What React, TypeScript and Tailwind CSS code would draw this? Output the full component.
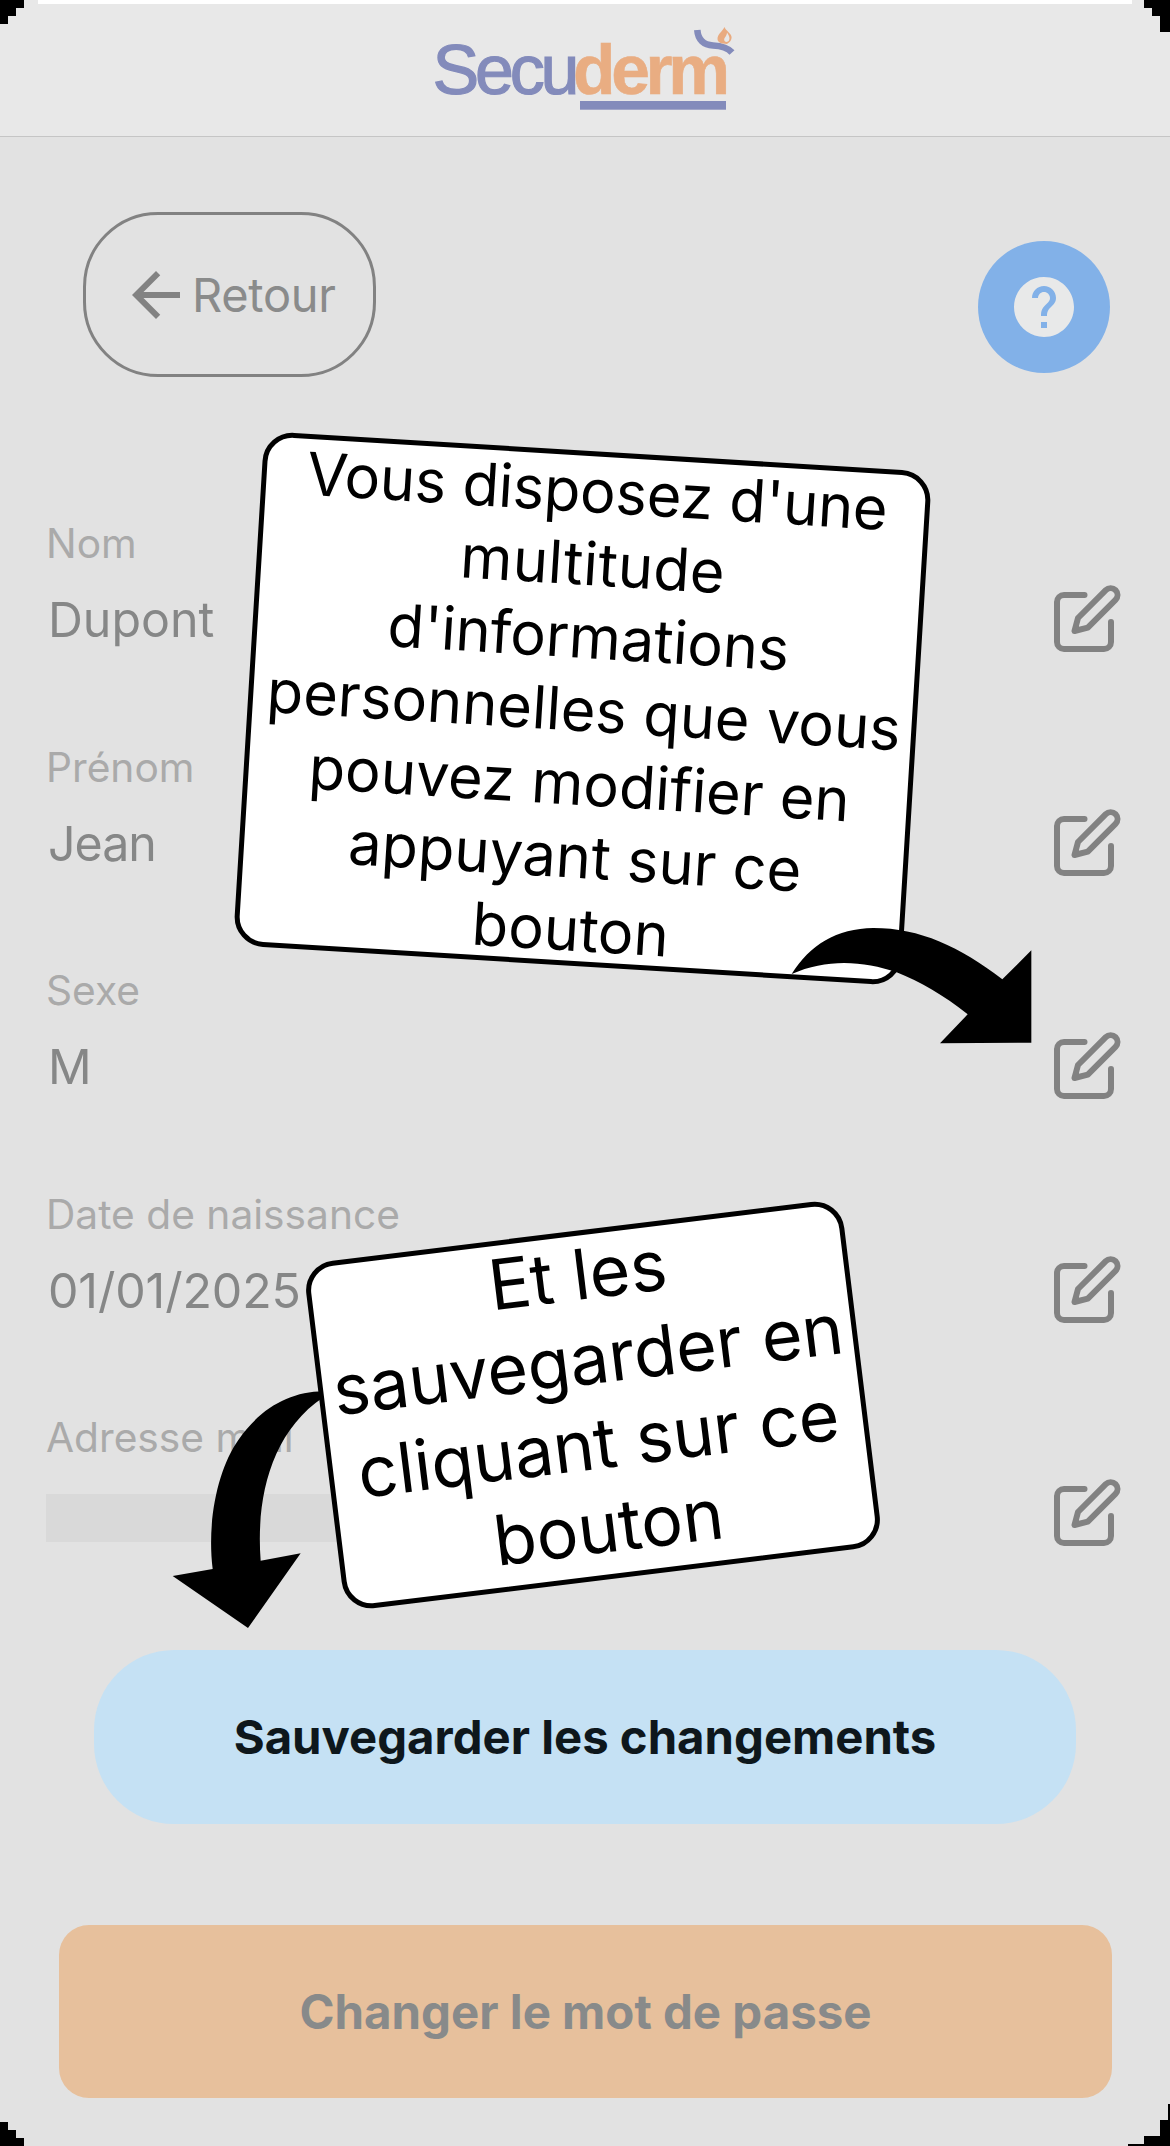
import { MdArrowBack, MdHelp } from "react-icons/md";

const fields = [
  { label: "Nom", value: "Dupont", spacing: "tracking-normal" },
  { label: "Prénom", value: "Jean", spacing: "tracking-[-1px]" },
  { label: "Sexe", value: "M", spacing: "tracking-normal" },
  { label: "Date de naissance", value: "01/01/2025", spacing: "tracking-[-0.1px]" },
  { label: "Adresse mail", value: "", spacing: "" },
];

function Logo() {
  return (
    <svg width="310" height="90" viewBox="430 24 310 90" className="mt-6 shrink-0">
      <g fontFamily="Liberation Sans, Arial, sans-serif">
        <text x="432.5" y="93.5" fontSize="70" fill="#838bbb" stroke="#838bbb" strokeWidth="1.2" textLength="147" lengthAdjust="spacing">Secu</text>
        <text x="573" y="93.5" fontSize="69.5" fontWeight="700" fill="#e9ad82" stroke="#e9ad82" strokeWidth="0.6" textLength="157" lengthAdjust="spacing">derm</text>
      </g>
      <rect x="580" y="101" width="146" height="8.7" fill="#838bbb" />
      <path d="M697.3 30C698 40 704 45 713 45.5C722 46 728 48 732 52.5" fill="none" stroke="#838bbb" strokeWidth="6.6" />
      <path fillRule="evenodd" d="M724.5 27C722 32 717.500 34 717.500 39C717.500 41 719 42.5 721 43.2L727 44C730 42 731.8 40 731.6 37C731 33 726 31 724.5 27ZM727 32.500C729.500 36 730 38 729 40.500C728 42.500 724.500 42.500 724.200 40C724 37.500 727 36 727 32.500Z" fill="#e9ab80" />
    </svg>
  );
}

function EditIcon() {
  return (
    <svg width="72" height="76" viewBox="0 0 72 76" fill="none" stroke="#828282" strokeWidth="6" strokeLinecap="round" strokeLinejoin="round">
      <path d="M34.500 15H14a7 7 0 0 0-7 7V62a7 7 0 0 0 7 7H54a7 7 0 0 0 7-7V42" />
      <path d="M24.500 51L28 38L55.800 10.200a6.800 6.800 0 0 1 9.700 9.700L37.800 47.600Z" />
    </svg>
  );
}

export default function App() {
  return (
    <div className="relative flex h-[2146px] w-[1170px] flex-col overflow-hidden bg-[#e2e2e2] font-[Inter,sans-serif]">
      <header className="flex h-[137px] shrink-0 justify-center border-b border-[#c5c5c5] bg-[#e8e8e8]">
        <Logo />
      </header>

      <div className="mt-[75px] flex h-[165px] shrink-0 justify-between pr-[60px] pl-[83px]">
        <button className="flex h-[165px] w-[293px] items-center rounded-[75px] border-3 border-[#828282] pl-[34px] text-[#828282]">
          <MdArrowBack size={72} className="shrink-0" />
          <span className="pt-px text-[47px] tracking-[-0.3px] text-[#8a8b8b]">Retour</span>
        </button>
        <button className="mt-[29px] flex size-[132px] items-center justify-center rounded-full bg-[#82b1e8]">
          <MdHelp size={72} color="#e8e9e9" />
        </button>
      </div>

      <div className="mt-[136px] flex shrink-0 flex-col">
        {fields.map((f) => (
          <div key={f.label} className="flex h-[223.600px] justify-between pr-[48px] pl-[46px]">
            <div>
              <div className="mt-px h-[60px] text-[40.700px] leading-[60px] text-[#aaaaaa]">{f.label}</div>
              {f.value ? (
                <div className={`mt-[13px] ml-[2px] text-[48.300px] leading-[66px] text-[#868787] ${f.spacing}`}>{f.value}</div>
              ) : (
                <div className="mt-[26px] h-[48px] w-[320px] bg-[#d9d9d9]" />
              )}
            </div>
            <div className="mt-[67px]">
              <EditIcon />
            </div>
          </div>
        ))}
      </div>

      <button className="mt-[19px] ml-[94px] h-[174px] w-[982px] shrink-0 rounded-[80px] bg-[#c5e1f4] text-[47.300px] font-bold text-[#0e171c]">
        Sauvegarder les changements
      </button>
      <button className="mt-[101px] ml-[59px] h-[173px] w-[1053px] shrink-0 rounded-[30px] bg-[#e7c09c] text-[47.400px] font-bold text-[#888a8a]">
        Changer le mot de passe
      </button>

      {/* Tutorial bubbles */}
      <div className="absolute top-[451px] left-[247.500px] flex h-[515px] w-[669px] rotate-[3.5deg] flex-col items-center justify-center rounded-[30px] border-5 border-black bg-white pt-[3px] pl-[3px] text-center text-[59.500px] leading-[73.200px] whitespace-nowrap text-black">
        <p className="tracking-[-0.2px]">Vous disposez d'une</p>
        <p className="tracking-[0.300px]">multitude</p>
        <p className="tracking-[-0.2px]">d'informations</p>
        <p>personnelles que vous</p>
        <p>pouvez modifier en</p>
        <p>appuyant sur ce</p>
        <p>bouton</p>
      </div>
      <svg className="absolute inset-0" width="1170" height="2146" viewBox="0 0 1170 2146">
        <g transform="translate(760 900) scale(0.33333)">
          <path d="M95 222C150 135 230 85 340 84C480 84 600 140 727 238L814 151V428L540 430L623 343C550 285 480 245 410 217C310 182 200 175 95 222Z" />
        </g>
        <g transform="translate(150 1360) scale(0.33333)">
          <path d="M520 94C420 95 330 145 265 240C205 325 170 480 188 627L68 648L294 804L452 580L332 602C318 420 360 220 520 112Z" />
        </g>
      </svg>
      <div className="absolute top-[1229.500px] left-[322px] flex h-[350px] w-[542px] rotate-[-7deg] flex-col items-center justify-center rounded-[30px] border-5 border-black bg-white pb-[7px] pl-px text-center text-[69.700px] leading-[84.700px] whitespace-nowrap text-black">
        <p>Et les</p>
        <p>sauvegarder en</p>
        <p>cliquant sur ce</p>
        <p>bouton</p>
      </div>

      {/* Stepped frame corners and top highlight */}
      <svg className="absolute inset-0" width="1170" height="2146" viewBox="0 0 1170 2146" shapeRendering="crispEdges">
        <path d="M38 0H1132V4H38Z" fill="#fff" />
        <path d="M0 0H24V8H16V16H8V24H0Z" />
        <path d="M1170 0H1144V8H1152V16H1160V32H1170Z" />
        <path d="M0 2146V2122H8V2130H16V2138H24V2146Z" />
        <path d="M1170 2146H1128V2144H1144V2136H1160V2120H1168V2104H1170Z" />
      </svg>
    </div>
  );
}
